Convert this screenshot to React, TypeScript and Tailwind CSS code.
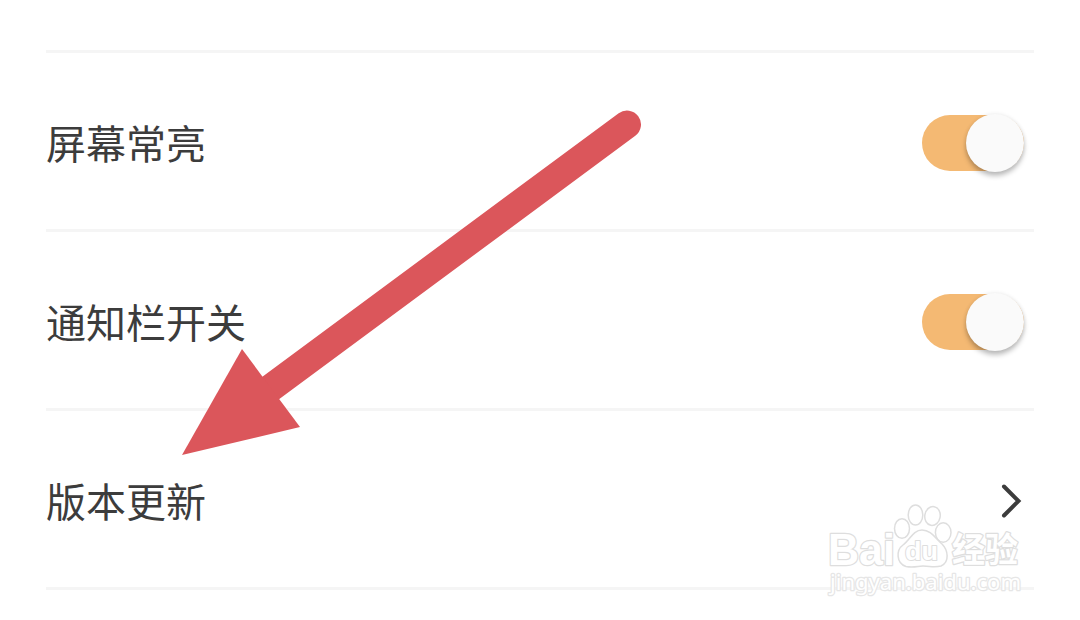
import { useState } from 'react';
import type { ReactNode } from 'react';

interface SettingRowProps {
  label: string;
  children: ReactNode;
}

function SettingRow({ label, children }: SettingRowProps) {
  return (
    <li className="flex h-[179px] items-center justify-between border-b-[3px] border-[#f5f5f5] pt-[2px]">
      <span className="text-[40px] leading-none text-[#3c3c3c]">{label}</span>
      {children}
    </li>
  );
}

function Toggle({ label }: { label: string }) {
  const [on, setOn] = useState(true);

  return (
    <button
      type="button"
      role="switch"
      aria-checked={on}
      aria-label={label}
      onClick={() => setOn((v) => !v)}
      className={`mr-[10px] mb-[-1px] flex h-14 w-[102px] items-center rounded-full ${
        on ? 'justify-end bg-[#f4b973]' : 'justify-start bg-[#d9d9d9]'
      }`}
    >
      <span className="size-[58px] shrink-0 rounded-full bg-[#fafafa] shadow-[0_4px_5px_rgba(0,0,0,0.25),0_0_4px_rgba(0,0,0,0.08)]" />
    </button>
  );
}

function ChevronIcon() {
  return (
    <svg className="mr-[12px] h-[36px] w-[22px]" viewBox="0 0 22 36" fill="none">
      <path d="M4 4.500 18.500 19 4 33.500" stroke="#3c3c3c" strokeWidth="4" strokeLinecap="round" />
    </svg>
  );
}

function Arrow() {
  return (
    <svg className="pointer-events-none absolute inset-0" width="1080" height="620" viewBox="0 0 1080 620">
      <path d="M627 124.500 270 388.500" stroke="#db565b" strokeWidth="28" strokeLinecap="round" />
      <path d="M182 455 242 349 300 427Z" fill="#db565b" />
    </svg>
  );
}

function Watermark() {
  return (
    <svg
      className="pointer-events-none absolute top-[495px] left-[820px]"
      width="210"
      height="110"
      viewBox="820 495 210 110"
      fill="#fff"
      stroke="#dedede"
      strokeWidth="1.5"
      strokeLinejoin="round"
    >
      <ellipse cx="902" cy="528.500" rx="7.500" ry="9.800" />
      <ellipse cx="915.500" cy="515" rx="7.300" ry="10" />
      <ellipse cx="932.500" cy="516" rx="7.700" ry="9.500" transform="rotate(10 932.5 516)" />
      <ellipse cx="943.200" cy="532.500" rx="7.800" ry="9.700" />
      <path d="M922 530C913 530 910 540 903 545C896 550 896 563 906 566.500C914 568 918 566 923 566C930 566 934 568 941 566C950 562 948 550 942 544C935 538 931 530 922 530Z" />
      <g style={{ paintOrder: 'stroke' }} strokeWidth="2.5">
        <text
          x="828"
          y="565"
          fontSize="45"
          fontWeight="700"
          textLength="67"
          lengthAdjust="spacingAndGlyphs"
          className="font-['Liberation_Sans',sans-serif]"
        >
          Bai
        </text>
        <text
          x="905"
          y="559.5"
          fontSize="26"
          fontWeight="700"
          strokeWidth="2"
          textLength="33"
          lengthAdjust="spacingAndGlyphs"
          className="font-['Liberation_Sans',sans-serif]"
        >
          du
        </text>
        <text
          x="952"
          y="562"
          fontSize="34"
          fontWeight="700"
          textLength="66"
          lengthAdjust="spacingAndGlyphs"
          className="font-['Noto_Sans_CJK_SC',sans-serif]"
        >
          经验
        </text>
        <text
          x="830"
          y="590"
          fontSize="22"
          stroke="#e6e6e6"
          textLength="191"
          lengthAdjust="spacingAndGlyphs"
          className="font-['Noto_Sans',sans-serif]"
        >
          jingyan.baidu.com
        </text>
      </g>
    </svg>
  );
}

export default function App() {
  return (
    <main className="relative h-[620px] w-[1080px] overflow-hidden bg-white px-[46px] font-['Noto_Sans_CJK_SC',sans-serif]">
      <div className="h-[53px] border-b-[3px] border-[#f5f5f5]" />
      <ul>
        <SettingRow label="屏幕常亮">
          <Toggle label="屏幕常亮" />
        </SettingRow>
        <SettingRow label="通知栏开关">
          <Toggle label="通知栏开关" />
        </SettingRow>
        <SettingRow label="版本更新">
          <ChevronIcon />
        </SettingRow>
      </ul>
      <Arrow />
      <Watermark />
    </main>
  );
}
